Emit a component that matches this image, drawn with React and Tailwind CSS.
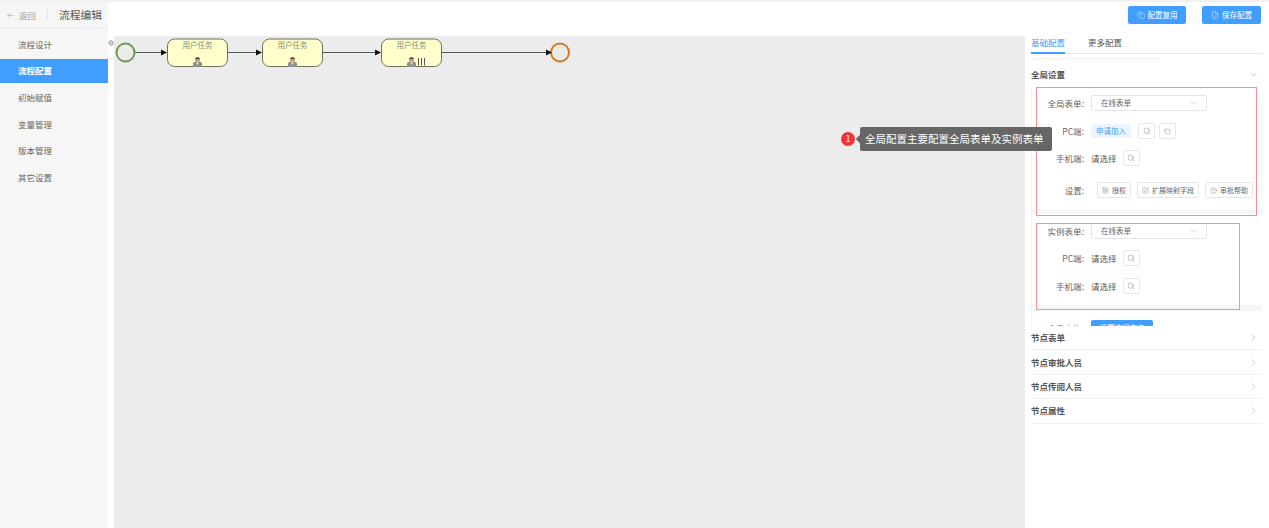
import { ArrowLeft, ChevronDown, ChevronRight, CircleHelp, Copy, FileCheck, RotateCcw, Search, SquareMenu, SquarePen } from 'lucide-react';

const menu = ['流程设计', '流程配置', '初始赋值', '变量管理', '版本管理', '其它设置'];
const accordions = ['节点表单', '节点审批人员', '节点传阅人员', '节点属性'];

const tasks = [
  { x: 167.5, multi: false },
  { x: 262.5, multi: false },
  { x: 381.5, multi: true },
];

function UserIcon({ x }) {
  return (
    <g>
      <path d={`M${x - 4.5} 67V63.5Q${x - 4.5} 61.8 ${x - 2} 61.5H${x + 2}Q${x + 4.5} 61.8 ${x + 4.5} 63.5V67Z`} fill="#8f8f8f" />
      <circle cx={x} cy="59.5" r="2.6" fill="#c99a78" />
      <path d={`M${x - 2.6} 59Q${x} 55.6 ${x + 2.6} 59Z`} fill="#5b4636" />
      <rect x={x - 1} y="61.5" width="2" height="3" fill="#e8d4c2" />
    </g>
  );
}

function Diagram() {
  return (
    <svg width="560" height="50" className="absolute left-0 top-0" viewBox="114 36 560 50">
      <circle cx="125.5" cy="52.5" r="9" fill="none" stroke="#6f9a4f" strokeWidth="2" />
      <circle cx="560" cy="52.5" r="9" fill="none" stroke="#d9771a" strokeWidth="2" />
      {[[135, 160], [228, 255], [323, 374], [442, 545]].map(([a, b]) => (
        <g key={a}>
          <line x1={a} y1="52.5" x2={b + 2} y2="52.5" stroke="#555" strokeWidth="1" />
          <path d={`M${b + 1} 49.5L${b + 7} 52.5L${b + 1} 55.5Z`} fill="#111" />
        </g>
      ))}
      {tasks.map((t) => (
        <g key={t.x}>
          <rect x={t.x} y="39" width="60" height="27.5" rx="7" fill="#ffffcc" stroke="#6f6f60" strokeWidth="1" />
          <text x={t.x + 30} y="47.5" textAnchor="middle" fontSize="7.5" fill="#8a8a70" fontFamily="'Noto Sans CJK SC', sans-serif">用户任务</text>
          <UserIcon x={t.x + 30} />
          {t.multi && (
            <path d={`M${t.x + 37} 58V65.5M${t.x + 40} 58V65.5M${t.x + 43} 58V65.5`} stroke="#555" strokeWidth="1" />
          )}
        </g>
      ))}
    </svg>
  );
}

function SmallButton({ children }) {
  return (
    <button className="flex h-4 items-center justify-center gap-[3px] rounded-[2px] border border-[#e6e8ec] bg-white px-[4px] text-[7px] text-[#666]">
      {children}
    </button>
  );
}

function IconButton({ className = '', children }) {
  return (
    <button className={`flex h-4 w-[17px] items-center justify-center rounded-[2px] border border-[#e6e8ec] bg-white text-[#666] ${className}`}>
      {children}
    </button>
  );
}

function Row({ label, className, children }) {
  return (
    <div className={`flex h-4 items-center ${className}`}>
      <span className="w-[52px] shrink-0 text-right text-[8.5px] text-[#666]">{label}:</span>
      <div className="ml-[7px] flex items-center text-[8.5px] text-[#555]">{children}</div>
    </div>
  );
}

function SelectBox() {
  return (
    <div className="flex h-4 w-[116px] items-center justify-between rounded-[2px] border border-[#e3e5ea] pl-[9px] pr-[8px] text-[7.5px] text-[#666]">
      在线表单
      <ChevronDown size={10} strokeWidth={1} color="#999" />
    </div>
  );
}

const SearchIcon = () => <Search size={8} strokeWidth={1.2} />;

export default function App() {
  return (
    <div className="relative h-[528px] w-[1269px] overflow-hidden bg-white font-['Noto_Sans_CJK_SC','Noto_Sans',sans-serif]">
      <div className="h-[2px] bg-[#f2f2f2]" />
      <div className="flex h-[526px]">
        {/* sidebar */}
        <aside className="w-[108px] shrink-0 bg-[#f6f6f6]">
          <div className="flex h-[27px] items-center border-b border-[#eeeeee] pl-[6px]">
            <ArrowLeft size={9} strokeWidth={1.2} color="#888" />
            <span className="ml-[4px] text-[8.5px] text-[#999]">返回</span>
            <span className="ml-[11px] h-[10px] w-px bg-[#e2e2e2]" />
            <span className="ml-[11px] text-[10.75px] text-[#555]">流程编辑</span>
          </div>
          <nav className="flex flex-col gap-[2.7px] pt-[3px]">
            {menu.map((name) => (
              <div
                key={name}
                className={`flex h-6 items-center pl-[18px] text-[8.5px] ${name === '流程配置' ? 'bg-[#3f9eff] font-bold text-white' : 'text-[#666]'}`}
              >
                {name}
              </div>
            ))}
          </nav>
        </aside>

        <div className="flex min-w-0 flex-1 flex-col">
          {/* top bar */}
          <div className="flex h-[34px] shrink-0 items-start justify-end gap-4 pr-2 pt-[4px]">
            <button className="flex h-[18px] w-[58px] items-center justify-center gap-[3px] rounded-[2px] bg-[#409eff] text-[7.5px] text-white">
              <Copy size={8} strokeWidth={1.2} />配置复用
            </button>
            <button className="flex h-[18px] w-[59px] items-center justify-center gap-[3px] rounded-[2px] bg-[#409eff] text-[7.5px] text-white">
              <FileCheck size={8} strokeWidth={1.2} />保存配置
            </button>
          </div>

          <div className="flex min-h-0 flex-1">
            {/* collapse handle */}
            <div className="w-[6px] shrink-0 pt-[4px]">
              <svg width="6" height="6" viewBox="0 0 6 6" fill="none" stroke="#777" strokeWidth="0.8">
                <path d="M0 3H6M1 2L3 0.5L5 2M1 4L3 5.5L5 4" />
              </svg>
              <div className="mt-[12px] h-px bg-[#eeeeee]" />
            </div>

            {/* canvas */}
            <div className="w-[911px] shrink-0">
              <div className="relative h-full bg-[#ececec]">
                <Diagram />
              </div>
            </div>

            {/* right panel */}
            <div className="min-w-0 flex-1 pl-[6px] pr-[7px]">
              <div className="flex h-[18px] gap-[23px] border-b border-[#e4e7ed] text-[8.5px]">
                <span className="-mb-px h-[18px] border-b-2 border-[#409eff] text-[#409eff]">基础配置</span>
                <span className="text-[#555]">更多配置</span>
              </div>
              <div className="mt-[4px] h-px w-[130px] bg-[#f2f2f2]" />
              <div className="flex h-[28px] items-center justify-between pr-[3px] pt-[3px] text-[8.5px] font-bold text-[#555]">
                全局设置
                <ChevronDown size={11} strokeWidth={1} color="#888" />
              </div>

              {/* scrolling cards */}
              <div className="h-[239px] overflow-hidden bg-[#f5f6f7] pl-px">
                <div className="h-[122px] rounded-[2px] bg-white pt-[8px]">
                  <Row label="全局表单"><SelectBox /></Row>
                  <Row label="PC端" className="mt-[12px]">
                    <span className="flex h-[14px] w-[40px] items-center justify-center rounded-[2px] bg-[#ecf5ff] text-[7.5px] text-[#409eff]">申请加入</span>
                    <IconButton className="ml-[7px]"><SearchIcon /></IconButton>
                    <IconButton className="ml-[4px]"><RotateCcw size={7} strokeWidth={1.2} /></IconButton>
                  </Row>
                  <Row label="手机端" className="mt-[11px]">
                    请选择
                    <IconButton className="ml-[6px]"><SearchIcon /></IconButton>
                  </Row>
                  <div className="mt-[16px] flex items-center">
                    <span className="w-[52px] shrink-0 text-right text-[8.5px] text-[#666]">设置:</span>
                    <div className="ml-[13px] flex gap-[6px]">
                      <SmallButton><SquareMenu size={7} strokeWidth={1.2} />授权</SmallButton>
                      <SmallButton><SquarePen size={7} strokeWidth={1.2} />扩展映射字段</SmallButton>
                      <SmallButton><CircleHelp size={7} strokeWidth={1.2} />审批帮助</SmallButton>
                    </div>
                  </div>
                </div>
                <div className="mt-[5px] h-[91px] rounded-[2px] bg-white pt-[9px]">
                  <Row label="实例表单"><SelectBox /></Row>
                  <Row label="PC端" className="mt-[11px]">
                    请选择
                    <IconButton className="ml-[6px]"><SearchIcon /></IconButton>
                  </Row>
                  <Row label="手机端" className="mt-[12px]">
                    请选择
                    <IconButton className="ml-[6px]"><SearchIcon /></IconButton>
                  </Row>
                </div>
                <div className="mt-[6px] h-[30px] rounded-[2px] bg-white pt-[9px]">
                  <Row label="全局查询">
                    <span className="flex h-[16px] w-[62px] items-center justify-center rounded-[2px] bg-[#409eff] text-[7.5px] text-white">设置流程查询</span>
                  </Row>
                </div>
              </div>

              {/* accordion */}
              {accordions.map((name) => (
                <div key={name} className="flex h-[24.4px] items-center justify-between border-b border-[#eef0f4] pr-[3px] text-[8.5px] font-bold text-[#555]">
                  {name}
                  <ChevronRight size={11} strokeWidth={1} color="#888" />
                </div>
              ))}
            </div>
          </div>
        </div>
      </div>

      {/* annotation overlays */}
      <div className="absolute left-[1036px] top-[87px] h-[129px] w-[221px] border border-[#ff8f8f]" />
      <div className="absolute left-[1036px] top-[223px] h-[87px] w-[204px] border border-[#ff8f8f]" />
      <div className="absolute left-[841px] top-[132px] flex h-[14px] w-[14px] items-center justify-center rounded-full bg-[#f5333a] text-[9px] text-white">1</div>
      <div className="absolute left-[860px] top-[127px] flex h-6 w-[192px] items-center rounded-[2px] bg-[#666666] pl-[5px] text-[10.5px] text-white">
        <span className="absolute -left-[3px] top-[9px] h-[6px] w-[6px] rotate-45 bg-[#666666]" />
        全局配置主要配置全局表单及实例表单
      </div>
    </div>
  );
}
